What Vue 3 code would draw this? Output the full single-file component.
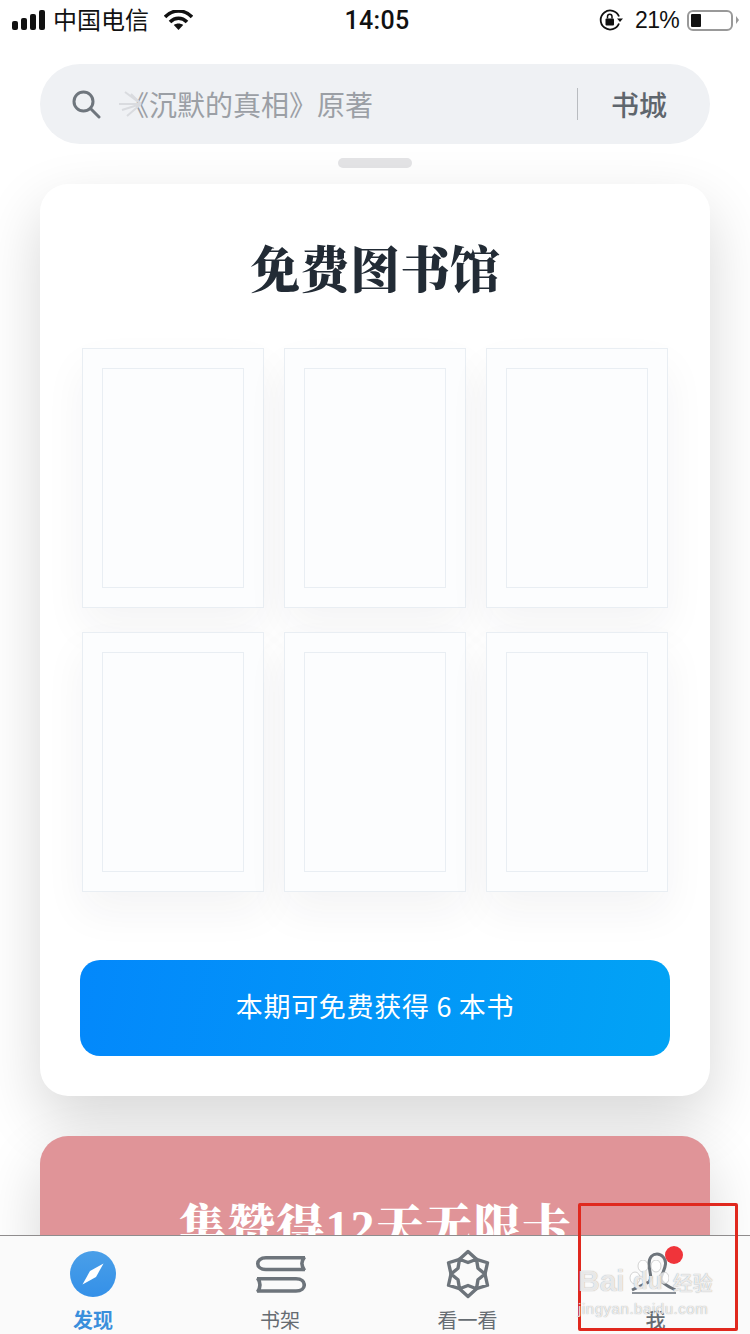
<script setup>
const rows = [[1, 2, 3], [4, 5, 6]]

// Six rhombus petals: outer and inner rings meet at shared waist points.
function ring(tipRadius, waistRadius) {
  const pts = []
  for (let i = 0; i < 12; i++) {
    const r = i % 2 === 0 ? tipRadius : waistRadius
    const a = (Math.PI / 6) * i - Math.PI / 2
    pts.push(`${(25 + r * Math.cos(a)).toFixed(2)},${(25 + r * Math.sin(a)).toFixed(2)}`)
  }
  return pts.join(' ')
}
const outerRing = ring(22.5, 17)
const innerRing = ring(11.5, 17)
</script>

<template>
  <div class="page">
    <header class="status">
      <div class="status-left">
        <svg class="signal" width="33" height="20" viewBox="0 0 33 20">
          <rect x="0" y="11" width="6" height="9" rx="2" fill="#111" />
          <rect x="9" y="8" width="6" height="12" rx="2" fill="#111" />
          <rect x="18" y="4" width="6" height="16" rx="2" fill="#111" />
          <rect x="27" y="0" width="6" height="20" rx="2" fill="#111" />
        </svg>
        <span class="carrier">中国电信</span>
        <svg class="wifi" width="29" height="20" viewBox="0 0 29 20">
          <path d="M1 7C9 -1 20 -1 28 7" fill="none" stroke="#111" stroke-width="3.6" />
          <path d="M6 12C11 7 18 7 23 12" fill="none" stroke="#111" stroke-width="3.6" />
          <path d="M9.8 15C12.5 13 16.5 13 19.2 15L14.5 20Z" fill="#111" />
        </svg>
      </div>
      <div class="clock">14:05</div>
      <div class="status-right">
        <svg width="24" height="22" viewBox="0 0 24 22">
          <path d="M20 14.5A9.5 9.5 0 1 1 20 7.5" fill="none" stroke="#111" stroke-width="1.8" />
          <path d="M18 9.5h6l-3 3.5z" fill="#111" />
          <rect x="6.5" y="9.5" width="8.5" height="7" rx="1" fill="#111" />
          <path d="M8.5 9.5V7.5a2.2 2.2 0 0 1 4.5 0v2" fill="none" stroke="#111" stroke-width="1.5" />
        </svg>
        <span class="percent">21%</span>
        <div class="battery"><i></i></div>
        <div class="battery-cap"></div>
      </div>
    </header>

    <div class="search">
      <svg class="search-icon" width="30" height="30" viewBox="0 0 30 30">
        <circle cx="12.5" cy="12.5" r="9.5" fill="none" stroke="#6f767d" stroke-width="3" />
        <path d="M19.5 19.5L28 28" stroke="#6f767d" stroke-width="3" stroke-linecap="round" />
      </svg>
      <span class="placeholder">
        <svg class="rays" width="24" height="26" viewBox="0 0 24 26">
          <path d="M0 13H22M3 19L22 13M8 25L22 13M6 1L22 13M12 3L22 13" stroke="#d9dbdf" stroke-width="2" fill="none" />
        </svg>《沉默的真相》原著</span>
      <span class="divider"></span>
      <span class="store">书城</span>
    </div>

    <div class="handle"></div>

    <main class="feed">
      <section class="card">
        <h1 class="card-title">免费图书馆</h1>
        <div class="shelf">
          <div v-for="(row, r) in rows" :key="r" class="shelf-row">
            <div v-for="n in row" :key="n" class="book"><div class="book-inner"></div></div>
          </div>
        </div>
        <button class="claim">本期可免费获得 6 本书</button>
      </section>

      <section class="promo">
        <h2 class="promo-title">集赞得12天无限卡</h2>
      </section>
    </main>

    <nav class="tabs">
      <div class="tab active">
        <svg class="tab-icon" width="46" height="46" viewBox="0 0 46 46">
          <defs>
            <linearGradient id="compass" x1="0" y1="0" x2="0" y2="1">
              <stop offset="0" stop-color="#4a9fe8" />
              <stop offset="1" stop-color="#3490e8" />
            </linearGradient>
          </defs>
          <circle cx="23" cy="23" r="23" fill="url(#compass)" />
          <path d="M33.5 12.5L20 20L12.5 33.5L26 26Z" fill="#fff" />
        </svg>
        <span>发现</span>
      </div>
      <div class="tab">
        <svg class="tab-icon" width="52" height="46" viewBox="-1 0 52 46">
          <path d="M50 6.8H11C0 6.8 0 18.5 11 18.5H50M49.5 6C46 11 46 14 49.5 19.5" fill="none" stroke="#6d747b" stroke-width="3.6" />
          <path d="M2 27.8H41C52 27.8 52 40 41 40H2M2.5 27C6 32 6 36 2.5 41" fill="none" stroke="#6d747b" stroke-width="3.6" />
        </svg>
        <span>书架</span>
      </div>
      <div class="tab">
        <svg class="tab-icon star" width="50" height="50" viewBox="0 0 50 50">
          <polygon :points="outerRing" fill="none" stroke="#6d747b" stroke-width="3.4" stroke-linejoin="round" />
          <polygon :points="innerRing" fill="none" stroke="#6d747b" stroke-width="3.4" stroke-linejoin="round" />
        </svg>
        <span>看一看</span>
      </div>
      <div class="tab">
        <svg class="tab-icon" width="50" height="46" viewBox="0 0 50 46">
          <path d="M18 31C22 28 18 20 18 13C18 6 22 3 26 3C31 3 35 8 34.5 13C34 19 30 24 30 28C30 32 38 36 44.5 39" fill="none" stroke="#6d747b" stroke-width="3" />
          <path d="M1 39L18 31" fill="none" stroke="#6d747b" stroke-width="3" stroke-dasharray="5 3" />
          <path d="M1 42H45" stroke="#8a9097" stroke-width="2" />
        </svg>
        <span>我</span>
        <i class="dot"></i>
      </div>
    </nav>

    <!-- callout frame and site mark laid over the tab bar -->
    <div class="callout"></div>
    <div class="mark">
      <div class="mark-main">
        <span>Bai</span>
        <span class="mark-paw">
          <svg width="40" height="32" viewBox="0 0 40 32">
            <ellipse cx="6" cy="18" rx="5" ry="6" />
            <ellipse cx="14" cy="6" rx="5" ry="6" />
            <ellipse cx="27" cy="6" rx="5" ry="6" />
            <ellipse cx="35" cy="18" rx="5" ry="6" />
          </svg>
          <b>du</b>
        </span>
        <span class="mark-cn">经验</span>
      </div>
      <span class="mark-sub">jingyan.baidu.com</span>
    </div>
  </div>
</template>

<style>
html, body { margin: 0; background: #fff; }
</style>

<style scoped>
.page {
  position: relative;
  width: 750px;
  height: 1334px;
  overflow: hidden;
  background: #fff;
  font-family: "Noto Sans CJK SC", "Noto Sans", sans-serif;
  display: flex;
  flex-direction: column;
}
.status {
  flex: none;
  height: 40px;
  display: grid;
  grid-template-columns: 1fr auto 1fr;
  align-items: center;
  color: #111;
  font-family: "Liberation Sans", "Noto Sans CJK SC", sans-serif;
}
.status-left { display: flex; align-items: center; padding-left: 12px; }
.signal { margin-right: 8px; }
.carrier { font-size: 24px; margin-bottom: 3px; }
.wifi { margin-left: 15px; }
.clock {
  font-family: Roboto, sans-serif;
  font-size: 25px;
  font-weight: 500;
  letter-spacing: 0.3px;
  margin-left: 4px;
}
.status-right { display: flex; align-items: center; justify-content: flex-end; padding-right: 11px; }
.percent { font-size: 23px; letter-spacing: -0.7px; margin-left: 12px; margin-right: 8px; }
.battery {
  width: 46px;
  height: 21px;
  box-sizing: border-box;
  border: 2px solid #999;
  border-radius: 6px;
  padding: 2px;
}
.battery i { display: block; width: 10px; height: 100%; background: #111; border-radius: 1px; }
.battery-cap {
  width: 0;
  height: 0;
  border-left: 3px solid #999;
  border-top: 4px solid transparent;
  border-bottom: 4px solid transparent;
  margin-left: 3px;
}

.search {
  flex: none;
  margin: 24px 40px 0;
  height: 80px;
  border-radius: 40px;
  background: #eff1f4;
  display: flex;
  align-items: center;
  padding-left: 31px;
  box-sizing: border-box;
}
.search-icon { flex: none; }
.placeholder { position: relative; margin-left: 20px; font-size: 28px; color: #9b9fa5; }
.rays { position: absolute; left: -2px; top: 7px; }
.divider { margin-left: auto; width: 1px; height: 32px; background: #b9bcc0; }
.store { margin: 0 43px 0 33px; font-size: 28px; font-weight: 500; color: #5f666d; }

.handle { flex: none; width: 74px; height: 10px; border-radius: 5px; background: #e4e4e6; margin: 14px auto 16px; }

.feed { flex: none; display: flex; flex-direction: column; gap: 40px; padding: 0 40px; }
.card {
  position: relative;
  z-index: 1;
  flex: none;
  height: 912px;
  box-sizing: border-box;
  background: #fff;
  border-radius: 28px;
  box-shadow: 0 24px 60px rgba(0, 0, 0, 0.16);
  padding-top: 52px;
  display: flex;
  flex-direction: column;
  align-items: center;
}
.card-title {
  margin: 0;
  height: 60px;
  line-height: 60px;
  font-size: 50px;
  font-weight: 900;
  color: #222b35;
  font-family: "Noto Serif CJK SC", "Noto Sans CJK SC", serif;
}
.shelf { margin-top: 52px; display: flex; flex-direction: column; gap: 24px; }
.shelf-row { display: flex; gap: 20px; }
.book {
  width: 182px;
  height: 260px;
  box-sizing: border-box;
  border: 1px solid #e9eef3;
  background: #fcfdfe;
  padding: 19px;
  box-shadow: 0 20px 40px rgba(30, 40, 60, 0.05);
}
.book-inner { height: 100%; border: 1px solid #e9eef3; box-sizing: border-box; }
.claim {
  margin-top: 68px;
  width: 590px;
  height: 96px;
  border: 0;
  border-radius: 20px;
  padding: 0 0 5px;
  background: linear-gradient(100deg, #0388fb, #02a3f5);
  color: #fff;
  font-family: inherit;
  font-size: 27px;
  font-weight: 400;
  letter-spacing: 0.7px;
}
.promo {
  position: relative;
  z-index: 1;
  flex: none;
  height: 300px;
  border-radius: 28px 28px 0 0;
  background: #e09498;
  text-align: center;
  box-shadow: 0 24px 60px rgba(0, 0, 0, 0.16);
  overflow: hidden;
}
.promo-title {
  margin: 62px 0 0;
  color: #fff;
  font-size: 48px;
  line-height: 60px;
  font-weight: 900;
  letter-spacing: 1px;
  font-family: "Liberation Serif", "Noto Serif CJK SC", "Noto Sans CJK SC", serif;
}

.tabs {
  position: absolute;
  z-index: 2;
  left: 0;
  right: 0;
  bottom: 0;
  height: 99px;
  box-sizing: border-box;
  border-top: 1px solid #8f8c8d;
  background: #fafafa;
  display: grid;
  grid-template-columns: 186px 188px 187px 189px;
  padding-bottom: 1px;
}
.tab {
  position: relative;
  display: flex;
  flex-direction: column;
  align-items: center;
  justify-content: flex-end;
  color: #666c72;
  font-size: 20px;
  line-height: 26px;
}
.tab-icon { position: absolute; top: 15px; left: 50%; transform: translateX(-50%); }
.tab-icon.star { top: 13px; }
.tab.active { color: #3a8fdc; font-weight: 700; }
.tab:last-child { font-weight: 500; }
.dot {
  position: absolute;
  left: 104px;
  top: 10px;
  width: 18px;
  height: 18px;
  border-radius: 50%;
  background: #f0343a;
}
.callout {
  position: absolute;
  z-index: 3;
  left: 578px;
  top: 1203px;
  width: 160px;
  height: 128px;
  box-sizing: border-box;
  border: 3px solid #e0281e;
  border-radius: 2px;
}
.mark {
  position: absolute;
  z-index: 3;
  left: 578px;
  top: 1260px;
  display: flex;
  flex-direction: column;
  color: rgba(255, 255, 255, 0.78);
  text-shadow: 0 0 1px rgba(110, 110, 110, 0.7);
  font-family: "Liberation Sans", "Noto Sans CJK SC", sans-serif;
}
.mark-main { display: flex; align-items: flex-end; height: 38px; font-size: 30px; line-height: 34px; font-weight: 700; }
.mark-paw { position: relative; width: 42px; margin-left: 2px; font-size: 24px; text-align: center; }
.mark-paw svg { position: absolute; left: 2px; bottom: 6px; fill: rgba(255, 255, 255, 0.72); stroke: rgba(150, 150, 150, 0.4); }
.mark-paw b { position: relative; }
.mark-cn { margin-left: 4px; font-size: 20px; line-height: 28px; font-weight: 500; }
.mark-sub { margin-top: 3px; font-size: 15px; line-height: 16px; letter-spacing: 0.55px; font-weight: 400; }
</style>
